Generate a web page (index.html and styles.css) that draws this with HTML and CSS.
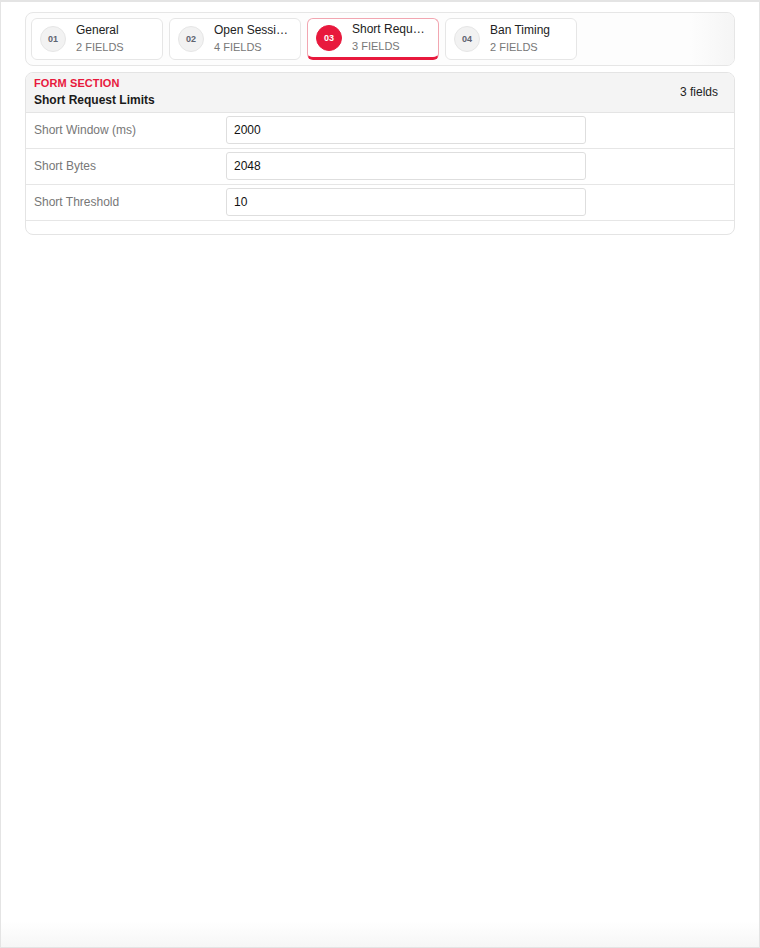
FILE: index.html
```html
<!DOCTYPE html>
<html lang="en">
<head>
<meta charset="utf-8">
<title>Form Sections</title>
<link rel="stylesheet" href="styles.css">
</head>
<body>
<div class="frame">
  <nav class="tabs">
    <div class="tab">
      <span class="tab-num">01</span>
      <span class="tab-text"><span class="tab-title">General</span><span class="tab-sub">2 FIELDS</span></span>
    </div>
    <div class="tab">
      <span class="tab-num">02</span>
      <span class="tab-text"><span class="tab-title">Open Sessions</span><span class="tab-sub">4 FIELDS</span></span>
    </div>
    <div class="tab tab-active">
      <span class="tab-num">03</span>
      <span class="tab-text"><span class="tab-title">Short Request Limits</span><span class="tab-sub">3 FIELDS</span></span>
    </div>
    <div class="tab">
      <span class="tab-num">04</span>
      <span class="tab-text"><span class="tab-title">Ban Timing</span><span class="tab-sub">2 FIELDS</span></span>
    </div>
  </nav>

  <section class="card">
    <header class="card-head">
      <div class="head-text">
        <div class="eyebrow">FORM SECTION</div>
        <div class="card-title">Short Request Limits</div>
      </div>
      <div class="count">3 fields</div>
    </header>
    <div class="row">
      <label class="label">Short Window (ms)</label>
      <input class="field" type="text" value="2000">
    </div>
    <div class="row">
      <label class="label">Short Bytes</label>
      <input class="field" type="text" value="2048">
    </div>
    <div class="row">
      <label class="label">Short Threshold</label>
      <input class="field" type="text" value="10">
    </div>
    <div class="card-foot"></div>
  </section>
</div>
</body>
</html>
```

FILE: styles.css
```css
* { box-sizing: border-box; }

html, body {
  margin: 0;
  padding: 0;
  background: #ffffff;
  font-family: "Liberation Sans", Arial, sans-serif;
  color: #222;
}

.frame {
  position: relative;
  height: 948px;
  border: 1px solid #e4e4e4;
  border-top-width: 2px;
  padding: 10px 24px;
  overflow: hidden;
}

.frame::after {
  content: "";
  position: absolute;
  left: 0;
  right: 0;
  bottom: 0;
  height: 26px;
  background: linear-gradient(to bottom, rgba(245,245,245,0), #f6f6f6);
  pointer-events: none;
}

/* Tabs */
.tabs {
  position: relative;
  display: flex;
  gap: 6px;
  padding: 5px;
  border: 1px solid #e6e6e6;
  border-radius: 8px;
  background: #fdfdfd;
  overflow: hidden;
}

.tabs::after {
  content: "";
  position: absolute;
  top: 0;
  right: 0;
  bottom: 0;
  width: 44px;
  background: linear-gradient(to right, rgba(245,245,245,0), #f5f5f5);
  pointer-events: none;
}

.tab {
  width: 132px;
  height: 42px;
  flex: none;
  display: flex;
  align-items: center;
  gap: 10px;
  padding: 0 10px 0 8px;
  border: 1px solid #e6e6e6;
  border-radius: 6px;
  background: #fff;
}

.tab-num {
  flex: none;
  width: 26px;
  height: 26px;
  border-radius: 50%;
  background: #f2f2f2;
  border: 1px solid #e6e6e6;
  display: flex;
  align-items: center;
  justify-content: center;
  font-size: 9px;
  font-weight: bold;
  color: #5f6470;
}

.tab-text {
  flex: 1;
  min-width: 0;
  display: flex;
  flex-direction: column;
  padding-bottom: 2px;
}

.tab-title {
  font-size: 12px;
  line-height: 16px;
  color: #222;
  white-space: nowrap;
  overflow: hidden;
  text-overflow: ellipsis;
}

.tab-sub {
  font-size: 11px;
  line-height: 14px;
  margin-top: 2px;
  color: #777;
  white-space: nowrap;
}

.tab-active {
  border-color: #f2a6b1;
  border-bottom: 3px solid #e8193d;
}

.tab-active .tab-num {
  background: #e8193d;
  border-color: #e8193d;
  color: #fff;
}

/* Card */
.card {
  margin-top: 6px;
  border: 1px solid #e4e4e4;
  border-radius: 8px;
  overflow: hidden;
  background: #fff;
}

.card-head {
  display: flex;
  align-items: center;
  justify-content: space-between;
  padding: 3px 16px 4px 8px;
  background: #f4f4f4;
  border-bottom: 1px solid #e4e4e4;
}

.eyebrow {
  font-size: 11px;
  line-height: 14px;
  font-weight: bold;
  letter-spacing: 0.1px;
  color: #e8193d;
}

.card-title {
  margin-top: 2px;
  font-size: 12px;
  line-height: 16px;
  font-weight: bold;
  color: #1a1a1a;
}

.count {
  font-size: 12px;
  line-height: 16px;
  color: #222;
}

.row {
  display: flex;
  align-items: center;
  padding: 3px 8px 4px;
  border-bottom: 1px solid #e6e6e6;
}

.label {
  width: 192px;
  flex: none;
  font-size: 12px;
  color: #777;
}

.field {
  width: 360px;
  height: 28px;
  margin: 0;
  padding: 0 7px;
  border: 1px solid #dedede;
  border-radius: 3px;
  background: #fff;
  font-family: "Liberation Sans", Arial, sans-serif;
  font-size: 12px;
  color: #111;
  outline: none;
}

.card-foot {
  height: 13px;
}
```
